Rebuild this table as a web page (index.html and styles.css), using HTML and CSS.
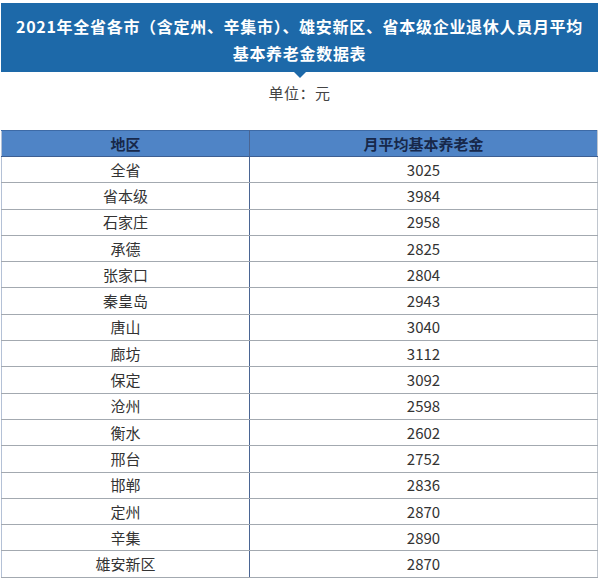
FILE: index.html
```html
<!DOCTYPE html>
<html lang="zh">
<head>
<meta charset="utf-8">
<link rel="stylesheet" href="styles.css">
</head>
<body>
<div class="page">
  <div class="banner">
    <div class="banner-line">2021年全省各市（含定州、辛集市）、雄安新区、省本级企业退休人员月平均</div>
    <div class="banner-line">基本养老金数据表</div>
  </div>
  <div class="unit">单位：元</div>
  <table class="data">
    <thead>
      <tr><th class="col-a">地区</th><th class="col-b">月平均基本养老金</th></tr>
    </thead>
    <tbody>
      <tr><td class="col-a">全省</td><td>3025</td></tr>
      <tr><td class="col-a">省本级</td><td>3984</td></tr>
      <tr><td class="col-a">石家庄</td><td>2958</td></tr>
      <tr><td class="col-a">承德</td><td>2825</td></tr>
      <tr><td class="col-a">张家口</td><td>2804</td></tr>
      <tr><td class="col-a">秦皇岛</td><td>2943</td></tr>
      <tr><td class="col-a">唐山</td><td>3040</td></tr>
      <tr><td class="col-a">廊坊</td><td>3112</td></tr>
      <tr><td class="col-a">保定</td><td>3092</td></tr>
      <tr><td class="col-a">沧州</td><td>2598</td></tr>
      <tr><td class="col-a">衡水</td><td>2602</td></tr>
      <tr><td class="col-a">邢台</td><td>2752</td></tr>
      <tr><td class="col-a">邯郸</td><td>2836</td></tr>
      <tr><td class="col-a">定州</td><td>2870</td></tr>
      <tr><td class="col-a">辛集</td><td>2890</td></tr>
      <tr><td class="col-a">雄安新区</td><td>2870</td></tr>
    </tbody>
  </table>
</div>
</body>
</html>
```

FILE: styles.css
```css
html, body {
  margin: 0;
  padding: 0;
  background: #ffffff;
}

body {
  font-family: "Noto Sans CJK SC", "Noto Sans", "Liberation Sans", sans-serif;
  color: #333333;
}

.page {
  padding: 3px 2px 0 1px;
}

.banner {
  position: relative;
  background: #1d69a9;
  color: #ffffff;
  font-weight: bold;
  font-size: 16px;
  line-height: 27px;
  letter-spacing: 0.7px;
  text-align: center;
  padding: 10px 0 5px;
}

.banner::after {
  content: "";
  position: absolute;
  left: 50%;
  bottom: -6px;
  margin-left: -6px;
  border-left: 6px solid transparent;
  border-right: 6px solid transparent;
  border-top: 6px solid #1d69a9;
}

.unit {
  margin-top: 11px;
  text-align: center;
  font-size: 15px;
  line-height: 20px;
  letter-spacing: 0.5px;
  color: #444444;
}

.data {
  margin-top: 27px;
  width: 100%;
  border-collapse: collapse;
  table-layout: fixed;
  font-size: 15px;
}

.data th,
.data td {
  text-align: center;
  padding: 0;
  border-bottom: 1px solid #a3a9b0;
}

.data th {
  background: #4f84c6;
  color: #17284a;
  font-weight: bold;
  height: 25px;
  line-height: 24px;
  border-top: 1px solid #3d6aa6;
  border-bottom: 1px solid #3d5f92;
}

.data td {
  height: 25.3px;
  line-height: 24px;
  color: #333333;
}

.data .col-a {
  width: 247px;
  border-left: 1px solid #b4c1d6;
  border-right: 1px solid #4a6593;
}

.data td:last-child,
.data th:last-child {
  border-right: 1px solid #c0c6ce;
}
```
